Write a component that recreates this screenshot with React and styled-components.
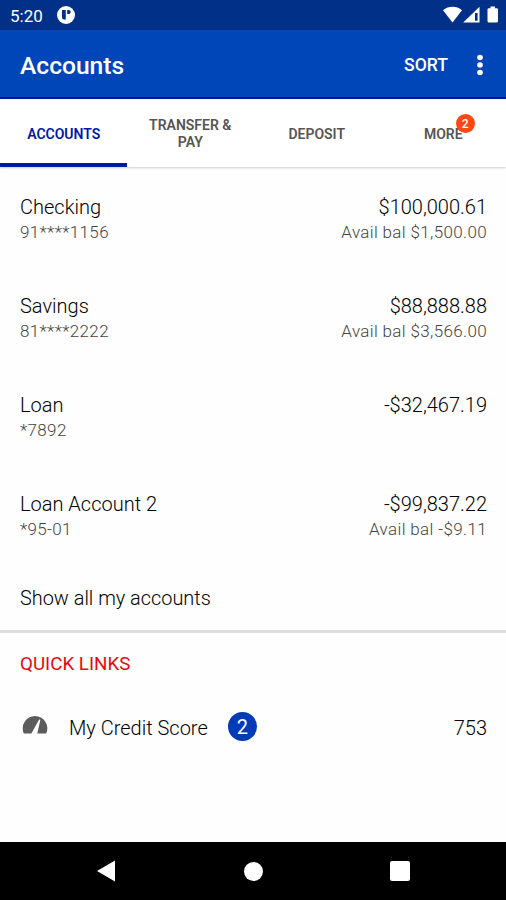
import React from 'react'
import styled, { createGlobalStyle } from 'styled-components';

const accounts = [
  { name: 'Checking', number: '91****1156', balance: '$100,000.61', available: '$1,500.00' },
  { name: 'Savings', number: '81****2222', balance: '$88,888.88', available: '$3,566.00' },
  { name: 'Loan', number: '*7892', balance: '-$32,467.19' },
  { name: 'Loan Account 2', number: '*95-01', balance: '-$99,837.22', available: '-$9.11' },
];

const tabs = [
  { label: 'Accounts', active: true },
  { label: 'Transfer & Pay' },
  { label: 'Deposit' },
  { label: 'More', count: 2 },
];

function App() {
  return (
    <Screen>
      <GlobalStyle />
      <StatusBar>
        <Clock>5:20</Clock>
        <svg width="18" height="18" viewBox="0 0 18 18">
          <circle cx="9" cy="9" r="9" fill="#fff" />
          <path d="M5 4h3.800v9.500H7Q5 13.500 5 11.500zM10.200 4h1.500a2 2 0 0 1 0 4h-1.500z" fill="#003087" />
        </svg>
        <SystemIcons>
          <svg width="56" height="18" viewBox="0 0 56 18" fill="#fff">
            <path d="M0 4.200C5.200-.3 13.800-.3 19 4.200L9.500 16.500z" />
            <path fillRule="evenodd" d="M36.500 .8V16.500H20.200zM32 7v7.800h2.600V7z" />
            <path d="M47.500 .5h4.500v1.800h1.800q1.200 0 1.200 1.200V15q0 1.500-1.500 1.500h-7.500Q44.500 16.500 44.500 15V3.500q0-1.200 1.200-1.200H47.500z" />
          </svg>
        </SystemIcons>
      </StatusBar>

      <AppBar>
        <Title>Accounts</Title>
        <SortButton>SORT</SortButton>
        <MenuButton aria-label="More options">
          <svg width="6" height="22" viewBox="0 0 6 22" fill="#fff">
            <circle cx="3" cy="3.500" r="2.8" />
            <circle cx="3" cy="11" r="2.8" />
            <circle cx="3" cy="18.500" r="2.8" />
          </svg>
        </MenuButton>
      </AppBar>

      <TabBar>
        {tabs.map((tab) => (
          <Tab key={tab.label} $active={tab.active}>
            <TabLabel>
              {tab.label}
              {tab.count && <TabBadge>{tab.count}</TabBadge>}
            </TabLabel>
          </Tab>
        ))}
      </TabBar>

      <AccountList>
        {accounts.map((account) => (
          <AccountRow key={account.name}>
            <Column>
              <Primary>{account.name}</Primary>
              <Secondary>{account.number}</Secondary>
            </Column>
            <Column $right>
              <Primary>{account.balance}</Primary>
              {account.available && <Secondary>Avail bal {account.available}</Secondary>}
            </Column>
          </AccountRow>
        ))}
      </AccountList>
      <ShowAll>Show all my accounts</ShowAll>

      <QuickLinks>
        <SectionTitle>QUICK LINKS</SectionTitle>
        <LinkRow>
          <svg width="26" height="20" viewBox="0 0 26 20">
            <path d="M1.800 18.500A12.300 12.300 0 1 1 24.200 18.500z" fill="#5c5c5c" />
            <path d="M10 18.800L17.600 5.200L14.500 18.800z" fill="#fff" stroke="#fff" strokeWidth="1.400" strokeLinejoin="round" />
          </svg>
          <LinkLabel>My Credit Score</LinkLabel>
          <CountBadge>2</CountBadge>
          <Score>753</Score>
        </LinkRow>
      </QuickLinks>

      <NavBar>
        <svg width="18" height="22" viewBox="0 0 18 22">
          <path d="M0 11L18 .5v21z" fill="#fff" />
        </svg>
        <HomeDot />
        <RecentsSquare />
      </NavBar>
    </Screen>
  )
}

const GlobalStyle = createGlobalStyle`
  * {
    box-sizing: border-box;
  }

  body {
    margin: 0;
    background-color: #fff;
    font-family: Roboto, sans-serif;
  }
`;

const Screen = styled.div`
  width: 506px;
  height: 900px;
  display: flex;
  flex-direction: column;
  overflow: hidden;
  background-color: #fefefe;
`;

const StatusBar = styled.header`
  height: 30px;
  flex: none;
  display: flex;
  align-items: center;
  padding: 0 7px 0 10px;
  background-color: #003087;
  color: #fff;
`;

const Clock = styled.span`
  width: 47px;
  font-size: 17px;
  line-height: 20px;
  padding-top: 2px;
`;

const SystemIcons = styled.div`
  margin-left: auto;
  display: flex;
`;

const AppBar = styled.div`
  height: 69px;
  flex: none;
  display: flex;
  align-items: center;
  padding: 3px 23px 0 20px;
  background-color: #0046b8;
  border-bottom: 2px solid #000fa4;
  color: #fff;
`;

const Title = styled.h1`
  margin: 0;
  padding-top: 1px;
  flex: 1;
  font-size: 24.6px;
  font-weight: 500;
`;

const SortButton = styled.button`
  padding: 0;
  border: none;
  background: none;
  color: #fff;
  font-family: inherit;
  font-size: 17.6px;
  font-weight: 500;
`;

const MenuButton = styled(SortButton)`
  display: flex;
  margin-left: 29px;
`;

const TabBar = styled.nav`
  height: 68px;
  flex: none;
  display: grid;
  grid-template-columns: repeat(4, 1fr);
  background-color: #fff;
  box-shadow: 0 1px 2px rgba(0, 0, 0, 0.2);
`;

const Tab = styled.div`
  display: flex;
  align-items: center;
  justify-content: center;
  padding: 6px 16px 0;
  border-bottom: 4px solid ${(props) => (props.$active ? '#0018a8' : 'transparent')};
  color: ${(props) => (props.$active ? '#0018a8' : '#555')};
`;

const TabLabel = styled.span`
  position: relative;
  padding-left: 1px;
  font-size: 14px;
  font-weight: 600;
  line-height: 17px;
  text-align: center;
  text-transform: uppercase;
`;

const TabBadge = styled.span`
  position: absolute;
  top: -12px;
  right: -12px;
  width: 19px;
  height: 19px;
  border-radius: 50%;
  background-color: #ff4713;
  color: #fff;
  font-size: 12px;
  font-weight: 500;
  line-height: 20px;
`;

const AccountList = styled.main`
  padding-top: 2px;
`;

const AccountRow = styled.div`
  height: 99px;
  display: flex;
  justify-content: space-between;
  padding: 25px 19px 0 20px;
`;

const Column = styled.div`
  display: flex;
  flex-direction: column;
  align-items: ${(props) => (props.$right ? 'flex-end' : 'flex-start')};
`;

const Primary = styled.span`
  font-size: 20px;
  font-weight: 300;
  line-height: 26px;
  color: #000;
`;

const Secondary = styled.span`
  font-size: 17px;
  font-weight: 300;
  letter-spacing: 0.35px;
  line-height: 24px;
  color: #444;
`;

const ShowAll = styled.div`
  height: 68px;
  flex: none;
  padding: 21px 20px 0;
  border-bottom: 3px solid #ddd;
  font-size: 19.9px;
  font-weight: 300;
  line-height: 26px;
  color: #000;
`;

const QuickLinks = styled.section`
  flex: 1;
  padding: 18px 19px 0 20px;
`;

const SectionTitle = styled.h2`
  margin: 0;
  font-size: 18.8px;
  font-weight: 400;
  line-height: 26px;
  color: #e60a12;
`;

const LinkRow = styled.div`
  display: flex;
  align-items: center;
  height: 30px;
  margin-top: 34px;
  padding-left: 2px;
  font-size: 20px;
  font-weight: 300;
  color: #000;

  svg {
    margin-bottom: 3px;
  }
`;

const LinkLabel = styled.span`
  padding-top: 3px;
  margin-left: 21px;
`;

const CountBadge = styled.span`
  width: 29px;
  height: 29px;
  margin-left: 20px;
  border-radius: 50%;
  background-color: #003cb8;
  color: #fff;
  font-weight: 400;
  line-height: 31px;
  text-align: center;
`;

const Score = styled.span`
  padding-top: 3px;
  margin-left: auto;
`;

const NavBar = styled.footer`
  height: 58px;
  flex: none;
  display: flex;
  align-items: center;
  justify-content: space-between;
  padding: 0 96px 0 97px;
  background-color: #000;
`;

const HomeDot = styled.span`
  width: 19px;
  height: 19px;
  margin-left: 2px;
  border-radius: 50%;
  background-color: #fff;
`;

const RecentsSquare = styled.span`
  width: 20px;
  height: 20px;
  border-radius: 2px;
  background-color: #fff;
`;

export default App
